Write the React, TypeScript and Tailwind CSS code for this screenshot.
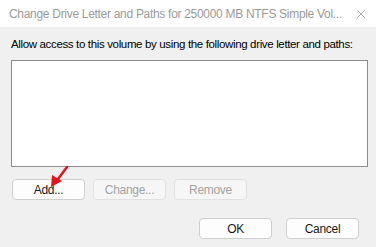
import { X } from 'lucide-react';

function Btn({ label, disabled, className = '' }: { label: string; disabled?: boolean; className?: string }) {
  return (
    <button
      disabled={disabled}
      className={`h-[21px] w-[73px] rounded-[4px] border text-[12px] leading-none tracking-[-0.3px] ${
        disabled
          ? 'border-[#e2e2e2] bg-[#f6f6f6] text-[#a3a3a3]'
          : 'border-[#cfcfcf] bg-[#fdfdfd] text-[#1a1a1a]'
      } ${className}`}
    >
      {label}
    </button>
  );
}

export default function App() {
  return (
    <div
      className="relative flex h-[247px] w-[376px] flex-col overflow-hidden bg-[#f0f0f0]"
      style={{ fontFamily: '"Liberation Sans", Arial, sans-serif' }}
    >
      {/* 标题栏 */}
      <div className="flex h-[27px] items-center justify-between bg-white pl-[9px] pr-[8px]">
        <span className="whitespace-nowrap text-[12px] tracking-[-0.3px] text-[#9b9b9b]">
          Change Drive Letter and Paths for 250000 MB NTFS Simple Vol...
        </span>
        <X size={14} strokeWidth={1.2} className="shrink-0 text-[#8a8a8a]" />
      </div>

      {/* 内容 */}
      <div className="flex flex-1 flex-col px-[11px] pt-[9px]">
        <p className="h-[16px] whitespace-nowrap text-[11.5px] leading-[16px] tracking-[-0.35px] text-black">
          Allow access to this volume by using the following drive letter and paths:
        </p>
        <div className="mt-[8px] h-[107px] w-[357px] border border-[#8c8c8c] bg-white" />

        <div className="ml-px mt-[12px] flex gap-[8px]">
          <Btn label="Add..." />
          <Btn label="Change..." disabled />
          <Btn label="Remove" disabled />
        </div>

        <div className="mr-[6px] mt-[18px] flex justify-end gap-[14px]">
          <Btn label="OK" />
          <Btn label="Cancel" />
        </div>
      </div>

      {/* 红色箭头标注 */}
      <svg className="absolute left-0 top-0" width="376" height="247" viewBox="0 0 376 247">
        <line x1="67" y1="167" x2="58" y2="179" stroke="#e3141b" strokeWidth="2.4" strokeLinecap="round" />
        <polygon points="51,187 52,175 62,181" fill="#e3141b" />
      </svg>
    </div>
  );
}
